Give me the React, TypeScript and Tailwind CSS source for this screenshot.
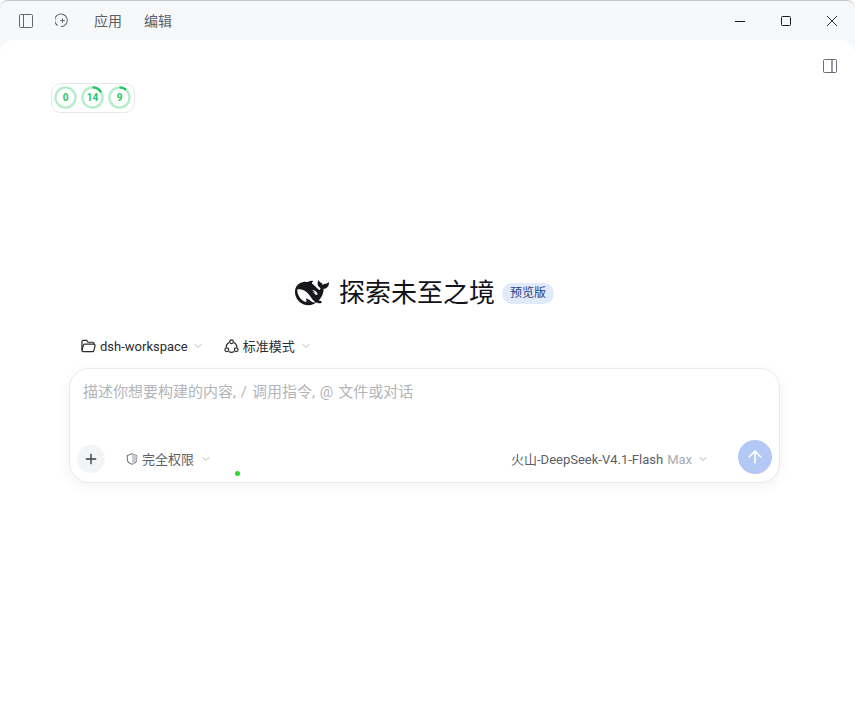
import { ArrowUp, ChevronDown, Plus } from 'lucide-react';

const font = 'font-["Roboto","Noto_Sans_CJK_SC",sans-serif]';

function Ring({ value, arc }: { value: string; arc: number }) {
  const c = 2 * Math.PI * 10;
  return (
    <div className="relative flex h-[23px] w-[23px] items-center justify-center">
      <svg viewBox="0 0 24 24" className="absolute inset-0 h-full w-full -rotate-90">
        <circle cx="12" cy="12" r="10.500" fill="none" stroke="#b4edc8" strokeWidth="2.400" />
        {arc > 0 && (
          <circle
            cx="12"
            cy="12"
            r="10.500"
            fill="none"
            stroke="#22c55e"
            strokeWidth="2.400"
            strokeDasharray={`${c * arc} ${c}`}
          />
        )}
      </svg>
      <span className="relative text-[10px] leading-none font-bold text-[#22c55e]">{value}</span>
    </div>
  );
}

function Whale() {
  return (
    <svg viewBox="0 0 24 24" className="h-[34px] w-[34px] shrink-0" fill="#15171c">
      <path d="M23.748 4.482c-.254-.124-.364.113-.512.234-.051.039-.094.09-.137.136-.372.397-.806.657-1.373.626-.829-.046-1.537.214-2.163.848-.133-.782-.575-1.248-1.247-1.548-.352-.156-.708-.311-.955-.65-.172-.241-.219-.51-.305-.774-.055-.16-.11-.323-.293-.35-.2-.031-.278.136-.356.276-.313.572-.434 1.202-.422 1.84.027 1.436.633 2.58 1.838 3.393.137.093.172.187.129.323-.082.28-.18.552-.266.833-.055.179-.137.217-.329.14a5.526 5.526 0 01-1.736-1.18c-.857-.828-1.631-1.742-2.597-2.458a11.365 11.365 0 00-.689-.471c-.985-.957.13-1.743.388-1.836.27-.098.093-.432-.779-.428-.872.004-1.67.295-2.687.684a3.055 3.055 0 01-.465.137 9.597 9.597 0 00-2.883-.102c-1.885.21-3.39 1.102-4.497 2.623C.082 8.606-.231 10.684.152 12.85c.403 2.284 1.569 4.175 3.36 5.653 1.858 1.533 3.997 2.284 6.438 2.14 1.482-.085 3.133-.284 4.994-1.86.47.234.962.327 1.78.397.63.059 1.236-.03 1.705-.128.735-.156.684-.837.419-.961-2.155-1.004-1.682-.595-2.113-.926 1.096-1.296 2.746-2.642 3.392-7.003.05-.347.007-.565 0-.845-.004-.17.035-.237.23-.256a4.173 4.173 0 001.545-.475c1.396-.763 1.96-2.015 2.093-3.517.02-.23-.004-.467-.247-.588zM11.581 18c-2.089-1.642-3.102-2.183-3.52-2.16-.392.024-.321.471-.235.763.09.288.207.486.371.739.114.167.192.416-.113.603-.673.416-1.842-.14-1.897-.167-1.361-.802-2.5-1.86-3.301-3.307-.774-1.393-1.224-2.887-1.298-4.482-.02-.386.093-.522.477-.592a4.696 4.696 0 011.529-.039c2.132.312 3.946 1.265 5.468 2.774.868.86 1.525 1.887 2.202 2.891.72 1.066 1.494 2.082 2.48 2.914.348.292.625.514.891.677-.802.09-2.14.11-3.054-.614zm1-6.44a.306.306 0 01.415-.287.302.302 0 01.2.288.306.306 0 01-.31.307.303.303 0 01-.304-.308zm3.11 1.596c-.2.081-.399.151-.59.16a1.245 1.245 0 01-.798-.254c-.274-.23-.47-.358-.552-.758a1.73 1.73 0 01.016-.588c.07-.327-.008-.537-.239-.727-.187-.156-.426-.199-.688-.199a.559.559 0 01-.254-.078c-.11-.054-.2-.19-.114-.358.028-.054.16-.186.192-.21.356-.202.767-.136 1.146.016.352.144.618.408 1.001.782.391.451.462.576.685.914.176.265.336.537.445.848.067.195-.019.354-.25.452z" />
    </svg>
  );
}

export default function App() {
  return (
    <div className={`flex h-[709px] w-[855px] flex-col overflow-hidden rounded-t-lg border-t border-[#c4c6ca] bg-[#f7f8fa] ${font}`}>
      <header className="flex h-[39px] shrink-0 items-center text-[#5c5f66]">
        <div className="flex items-center pl-[19px]">
          <svg viewBox="0 0 14 14" className="h-[14px] w-[14px]" fill="none" stroke="#63666c" strokeWidth="1">
            <rect x="0.500" y="0.500" width="13" height="13" rx="1" />
            <path d="M4.500 1v12" />
          </svg>
          <svg viewBox="0 0 16 16" className="ml-[22px] h-[15px] w-[15px]" fill="none" stroke="#63666c" strokeWidth="1.100">
            <path d="M3 13.500 A6.700 6.700 0 1 1 6 14.400" />
            <path d="M8 5.500v5M5.500 8h5" />
          </svg>
          <span className="ml-[24px] text-[14px] leading-none">应用</span>
          <span className="ml-[22px] text-[14px] leading-none">编辑</span>
        </div>
        <div className="ml-auto flex items-center pr-[18px]">
          <svg viewBox="0 0 10 10" className="h-[10px] w-[10px]" stroke="#1a1a1a" strokeWidth="1">
            <path d="M0 5.500h10" />
          </svg>
          <svg viewBox="0 0 10 10" className="ml-[36px] h-[10px] w-[10px]" fill="none" stroke="#1a1a1a" strokeWidth="1">
            <rect x="0.500" y="0.500" width="9" height="9" rx="1" />
          </svg>
          <svg viewBox="0 0 10 10" className="ml-[36px] h-[10px] w-[10px]" stroke="#1a1a1a" strokeWidth="0.900">
            <path d="M0 0l10 10M10 0L0 10" />
          </svg>
        </div>
      </header>

      <main className="flex flex-1 flex-col rounded-t-[14px] bg-white">
        <div className="flex justify-end pt-[19px] pr-[18px]">
          <svg viewBox="0 0 14 14" className="h-[14px] w-[14px]" fill="none" stroke="#6b6e74" strokeWidth="1">
            <rect x="0.500" y="0.500" width="13" height="13" rx="1" />
            <path d="M9 1v12" strokeWidth="2" stroke="#9a9ca1" />
          </svg>
        </div>

        <div className="mt-[10px] ml-[51px] flex h-[30px] w-[84px] items-center justify-center gap-[4px] rounded-[10px] border border-[#e6e7e9] pr-[1px] pb-[1px]">
          <Ring value="0" arc={0} />
          <Ring value="14" arc={0.17} />
          <Ring value="9" arc={0.12} />
        </div>

        <div className="mt-[165px] flex h-[30px] items-center justify-center pr-[6px]">
          <Whale />
          <h1 className="ml-[10px] text-[26px] leading-none font-normal text-[#111318]">探索未至之境</h1>
          <span className="ml-[7px] flex h-[21px] items-center rounded-full bg-[#e1eafb] px-[8px] text-[12px] leading-none text-[#27407f]">
            预览版
          </span>
        </div>

        <div className="mt-[26px] flex h-[24px] items-center pl-[81px] text-[13px] leading-none text-[#2b2d31]">
          <svg viewBox="0 0 16 14" className="h-[14px] w-[15px]" fill="none" stroke="#2b2d31" strokeWidth="1.300">
            <path d="M1 11.500V2.500A1.500 1.500 0 0 1 2.500 1H6l1.500 2H12.500A1.500 1.500 0 0 1 14 4.500V5" />
            <path d="M1 11.500 2.500 6.200A1.500 1.500 0 0 1 4 5H13.500A1.500 1.500 0 0 1 15 6.800L13.800 11.500A1.500 1.500 0 0 1 12.300 13H2.500A1.500 1.500 0 0 1 1 11.500Z" />
          </svg>
          <span className="ml-[4px]">dsh-workspace</span>
          <ChevronDown className="ml-[4px] h-[12px] w-[12px] text-[#b5b7bb]" />
          <svg viewBox="0 0 16 16" className="ml-[20px] h-[15px] w-[15px]" fill="none" stroke="#2b2d31" strokeWidth="1.300">
            <path d="M5.200 3.800A5.800 5.800 0 0 0 2.400 8.800M10.800 3.800A5.800 5.800 0 0 1 13.600 8.800M5.300 13.500A5.800 5.800 0 0 0 10.700 13.500" />
            <circle cx="8" cy="3" r="2" />
            <circle cx="3" cy="11.500" r="2" />
            <circle cx="13" cy="11.500" r="2" />
          </svg>
          <span className="ml-[4px]">标准模式</span>
          <ChevronDown className="ml-[5px] h-[12px] w-[12px] text-[#b5b7bb]" />
        </div>

        <div className="relative mt-[10px] ml-[69px] h-[115px] w-[711px] rounded-[20px] border border-[#e8e9eb] bg-white shadow-[0_4px_14px_rgba(0,0,0,0.05)]">
          <div className="pt-[14px] pl-[13px] text-[15px] leading-[18px] [word-spacing:1.200px] text-[#b2b5ba]">
            描述你想要构建的内容, / 调用指令, @ 文件或对话
          </div>
          <div className="mt-[39px] flex items-center px-[7px]">
            <button className="flex h-[28px] w-[28px] items-center justify-center rounded-full bg-[#f3f4f6]">
              <Plus className="h-[16px] w-[16px] text-[#3a3c40]" strokeWidth={2} />
            </button>
            <svg viewBox="0 0 14 14" className="ml-[21px] h-[12px] w-[12px]" fill="none" stroke="#6b6e74" strokeWidth="1.200">
              <path d="M7 1 12.500 3V7C12.500 10 10 12.300 7 13 4 12.300 1.500 10 1.500 7V3Z" />
              <path d="M7 1V13C10 12.300 12.500 10 12.500 7V3Z" fill="#c9cbcf" stroke="none" />
            </svg>
            <span className="ml-[4px] text-[13px] leading-none text-[#5c5f66]">完全权限</span>
            <ChevronDown className="ml-[6px] h-[12px] w-[12px] text-[#b5b7bb]" />
            <span className="ml-auto text-[13px] leading-none text-[#5c5f66]">火山-DeepSeek-V4.1-Flash</span>
            <span className="ml-[4px] text-[13px] leading-none text-[#a8abb0]">Max</span>
            <ChevronDown className="ml-[5px] h-[12px] w-[12px] text-[#b5b7bb]" />
            <button className="mb-[4px] ml-[29px] flex h-[34px] w-[34px] items-center justify-center rounded-full bg-[#b3c8f5]">
              <ArrowUp className="h-[20px] w-[20px] text-white" strokeWidth={2} />
            </button>
          </div>
          <span className="absolute top-[102px] left-[165px] h-[5px] w-[5px] rounded-full bg-[#2bdc2b]" />
        </div>
      </main>
    </div>
  );
}
